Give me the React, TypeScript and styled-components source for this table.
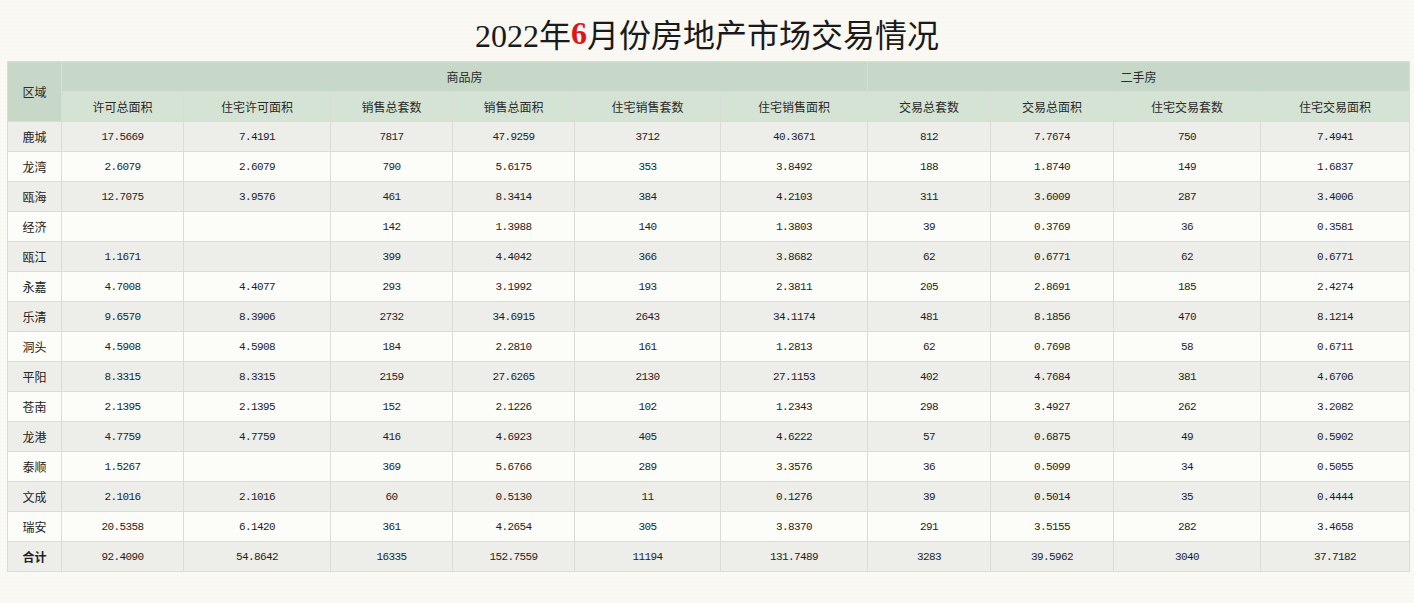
import React from "react";
import styled, { createGlobalStyle } from "styled-components";

const GlobalStyle = createGlobalStyle`
  html, body {
    margin: 0;
    padding: 0;
    background: #f9f8f3;
  }
`;

const Page = styled.div`
  width: 1414px;
  height: 603px;
  background: repeating-linear-gradient(
    180deg,
    #faf9f4 0px,
    #f8f7f1 2px,
    #faf9f4 4px
  );
  font-family: "Noto Sans CJK SC", sans-serif;
`;

const Title = styled.h1`
  margin: 0;
  height: 61px;
  display: flex;
  align-items: center;
  justify-content: center;
  padding-top: 5px;
  box-sizing: border-box;
  font-family: "Liberation Serif", "Noto Sans CJK SC", serif;
  font-weight: 400;
  font-size: 32px;
  color: #1a1a1a;
`;

const Red = styled.span`
  color: #e0141a;
  font-weight: 700;
`;

const TableWrap = styled.div`
  padding-left: 7px;
`;

const Table = styled.table`
  border-collapse: collapse;
  table-layout: fixed;
  width: 1402px;
`;

const HeadCell = styled.th<{ $level: 1 | 2 }>`
  height: 29px;
  padding: 0;
  line-height: 16px;
  border: 1px solid #dcdcd6;
  background: ${(p) => (p.$level === 1 ? "#c7d8c8" : "#d5e3d5")};
  font-family: "Noto Sans CJK SC", sans-serif;
  font-weight: 400;
  font-size: 12px;
  color: #2a2a2a;
  text-align: center;
`;

const Row = styled.tr<{ $odd: boolean }>`
  background: ${(p) => (p.$odd ? "#ededea" : "#fcfcf8")};
`;

const AreaCell = styled.td<{ $bold?: boolean }>`
  height: 29px;
  padding: 0;
  line-height: 16px;
  border: 1px solid #dcdcd6;
  text-align: center;
  font-family: "Noto Sans CJK SC", sans-serif;
  font-size: 12px;
  font-weight: ${(p) => (p.$bold ? 700 : 400)};
  color: #222;
`;

const NumCell = styled.td`
  padding: 0;
  line-height: 16px;
  border: 1px solid #dcdcd6;
  text-align: center;
  font-family: "Liberation Mono", monospace;
  font-size: 11px;
  letter-spacing: -0.6px;
  color: #1e1e1e;
`;

const widths = [54, 122, 147, 122, 122, 146, 147, 123, 123, 147, 149];

const subHeads = [
  "许可总面积",
  "住宅许可面积",
  "销售总套数",
  "销售总面积",
  "住宅销售套数",
  "住宅销售面积",
  "交易总套数",
  "交易总面积",
  "住宅交易套数",
  "住宅交易面积",
];

const rows: [string, ...string[]][] = [
  ["鹿城", "17.5669", "7.4191", "7817", "47.9259", "3712", "40.3671", "812", "7.7674", "750", "7.4941"],
  ["龙湾", "2.6079", "2.6079", "790", "5.6175", "353", "3.8492", "188", "1.8740", "149", "1.6837"],
  ["瓯海", "12.7075", "3.9576", "461", "8.3414", "384", "4.2103", "311", "3.6009", "287", "3.4006"],
  ["经济", "", "", "142", "1.3988", "140", "1.3803", "39", "0.3769", "36", "0.3581"],
  ["瓯江", "1.1671", "", "399", "4.4042", "366", "3.8682", "62", "0.6771", "62", "0.6771"],
  ["永嘉", "4.7008", "4.4077", "293", "3.1992", "193", "2.3811", "205", "2.8691", "185", "2.4274"],
  ["乐清", "9.6570", "8.3906", "2732", "34.6915", "2643", "34.1174", "481", "8.1856", "470", "8.1214"],
  ["洞头", "4.5908", "4.5908", "184", "2.2810", "161", "1.2813", "62", "0.7698", "58", "0.6711"],
  ["平阳", "8.3315", "8.3315", "2159", "27.6265", "2130", "27.1153", "402", "4.7684", "381", "4.6706"],
  ["苍南", "2.1395", "2.1395", "152", "2.1226", "102", "1.2343", "298", "3.4927", "262", "3.2082"],
  ["龙港", "4.7759", "4.7759", "416", "4.6923", "405", "4.6222", "57", "0.6875", "49", "0.5902"],
  ["泰顺", "1.5267", "", "369", "5.6766", "289", "3.3576", "36", "0.5099", "34", "0.5055"],
  ["文成", "2.1016", "2.1016", "60", "0.5130", "11", "0.1276", "39", "0.5014", "35", "0.4444"],
  ["瑞安", "20.5358", "6.1420", "361", "4.2654", "305", "3.8370", "291", "3.5155", "282", "3.4658"],
  ["合计", "92.4090", "54.8642", "16335", "152.7559", "11194", "131.7489", "3283", "39.5962", "3040", "37.7182"],
];

const App: React.FC = () => {
  return (
    <Page>
      <GlobalStyle />
      <Title>
        2022年<Red>6</Red>月份房地产市场交易情况
      </Title>
      <TableWrap>
        <Table>
          <colgroup>
            {widths.map((w, i) => (
              <col key={i} style={{ width: w }} />
            ))}
          </colgroup>
          <thead>
            <tr>
              <HeadCell $level={1} rowSpan={2}>
                区域
              </HeadCell>
              <HeadCell $level={1} colSpan={6}>
                商品房
              </HeadCell>
              <HeadCell $level={1} colSpan={4}>
                二手房
              </HeadCell>
            </tr>
            <tr>
              {subHeads.map((h) => (
                <HeadCell $level={2} key={h}>
                  {h}
                </HeadCell>
              ))}
            </tr>
          </thead>
          <tbody>
            {rows.map((r, i) => (
              <Row key={r[0]} $odd={i % 2 === 0}>
                <AreaCell $bold={r[0] === "合计"}>{r[0]}</AreaCell>
                {r.slice(1).map((v, j) => (
                  <NumCell key={j}>{v}</NumCell>
                ))}
              </Row>
            ))}
          </tbody>
        </Table>
      </TableWrap>
    </Page>
  );
};

export default App;
